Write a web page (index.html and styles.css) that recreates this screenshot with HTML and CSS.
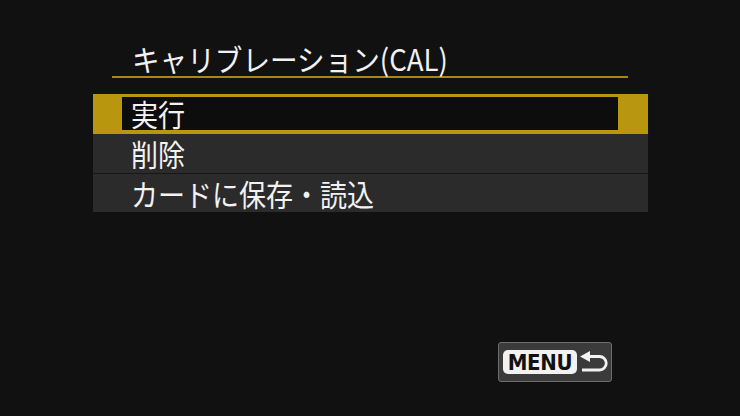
FILE: index.html
```html
<!DOCTYPE html>
<html lang="ja">
<head>
<meta charset="utf-8">
<title>キャリブレーション(CAL)</title>
<link rel="stylesheet" href="styles.css">
</head>
<body>
<div class="screen">
  <div class="title-bar">
    <h1 class="title"><span class="txt title-txt">キャリブレーション(CAL)</span></h1>
  </div>
  <ul class="menu">
    <li class="item selected"><span class="inner"><span class="txt">実行</span></span></li>
    <li class="item"><span class="txt">削除</span></li>
    <li class="item"><span class="txt">カードに保存・読込</span></li>
  </ul>
  <div class="footer">
    <div class="menu-btn">
      <span class="pill">MENU</span>
      <svg class="back" width="30" height="24" viewBox="0 0 30 24">
        <polygon points="1,6.5 11,1 11,12" fill="#f2f2f2"/>
        <path d="M10 6.5 H20.5 A6.75 6.75 0 0 1 20.5 20 H3" fill="none" stroke="#f2f2f2" stroke-width="2.8"/>
      </svg>
    </div>
  </div>
</div>
</body>
</html>
```
FILE: styles.css
```css
html, body {
  margin: 0;
  padding: 0;
  background: #111111;
}
body {
  width: 740px;
  height: 416px;
  overflow: hidden;
  font-family: "Noto Sans CJK JP", "Noto Sans", sans-serif;
  color: #f2f2f2;
}
.screen {
  padding-top: 40px;
}
.txt {
  display: inline-block;
  transform: scaleX(0.9);
  transform-origin: left center;
  white-space: nowrap;
}
.title-txt {
  transform: scaleX(0.92);
}
.title-bar {
  margin-left: 112px;
  width: 516px;
  border-bottom: 2px solid #a8880e;
}
.title {
  margin: 0;
  padding-left: 20px;
  font-size: 30px;
  font-weight: normal;
  line-height: 36px;
  height: 36px;
}
.menu {
  list-style: none;
  margin: 16px 0 0 93px;
  padding: 0;
  width: 555px;
}
.item {
  box-sizing: border-box;
  height: 39px;
  line-height: 39px;
  background: #2b2b2b;
  padding-left: 38px;
  font-size: 30px;
  border-top: 1px solid #171717;
}
.item.selected {
  height: 40px;
  background: #b8960e;
  border-top: none;
  padding: 3px 30px 4px 29px;
}
.inner {
  display: block;
  height: 33px;
  line-height: 33px;
  background: #0d0d0d;
  padding-left: 9px;
}
.item.selected + .item {
  border-top: none;
}
.footer {
  margin-top: 130px;
  margin-left: 498px;
}
.menu-btn {
  box-sizing: border-box;
  width: 114px;
  height: 40px;
  background: #3b3b3b;
  border: 1.5px solid #6e6e6e;
  border-radius: 3px;
  display: flex;
  align-items: center;
  padding-left: 4px;
}
.pill {
  display: flex;
  align-items: center;
  justify-content: center;
  width: 74px;
  height: 24px;
  background: #f2f2f2;
  border-radius: 5px;
  color: #111111;
  font-family: "DejaVu Sans Condensed", "DejaVu Sans", sans-serif;
  font-weight: bold;
  font-size: 22px;
  letter-spacing: -0.3px;
}
.back {
  margin-left: 2px;
  display: block;
}
```
